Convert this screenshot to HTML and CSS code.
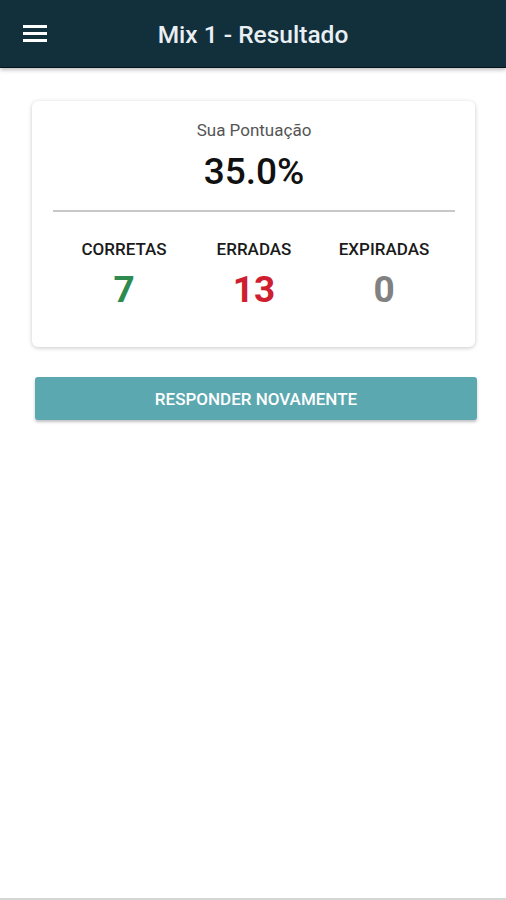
FILE: index.html
```html
<!DOCTYPE html>
<html>
    <head>
        <title>Mix 1 - Resultado</title>
        <link rel="stylesheet" href="styles.css">
    </head>
    <body>
        <header class="topbar">
            <button class="menu-btn" aria-label="Menu">
                <svg width="24" height="18" viewBox="0 0 24 18">
                    <rect x="0" y="1" width="24" height="3" fill="#ffffff"/>
                    <rect x="0" y="8" width="24" height="3" fill="#ffffff"/>
                    <rect x="0" y="15" width="24" height="3" fill="#ffffff"/>
                </svg>
            </button>
            <h1 class="title">Mix 1 - Resultado</h1>
        </header>
        <main class="content">
            <section class="result-card">
                <div class="score-label">Sua Pontuação</div>
                <div class="score-value">35.0%</div>
                <hr class="divider">
                <div class="stats">
                    <div class="stat">
                        <div class="stat-label">CORRETAS</div>
                        <div class="stat-value correct">7</div>
                    </div>
                    <div class="stat">
                        <div class="stat-label">ERRADAS</div>
                        <div class="stat-value wrong">13</div>
                    </div>
                    <div class="stat">
                        <div class="stat-label">EXPIRADAS</div>
                        <div class="stat-value expired">0</div>
                    </div>
                </div>
            </section>
            <button class="retry-btn">RESPONDER NOVAMENTE</button>
        </main>
        <div class="bottom-line"></div>
    </body>
</html>
```

FILE: styles.css
```css
html, body {
    height: 100%;
}
body {
    font-family: Roboto, "Noto Sans", sans-serif;
    background-color: #fff;
    margin: 0;
    display: flex;
    flex-direction: column;
}
.topbar {
    height: 67px;
    background-color: #12303c;
    border-bottom: 1px solid #05141a;
    box-shadow: 0 2px 4px rgba(0, 0, 0, 0.25);
    display: flex;
    align-items: center;
    position: relative;
}
.menu-btn {
    background: none;
    border: none;
    padding: 0;
    margin-left: 23px;
    margin-top: -2px;
    display: flex;
}
.title {
    position: absolute;
    left: 0;
    right: 0;
    margin: 0;
    text-align: center;
    color: #e9eff3;
    font-size: 24.5px;
    font-weight: 500;
    pointer-events: none;
    margin-top: 2px;
}
.content {
    flex: 1;
    padding: 33px 29px 0 32px;
}
.result-card {
    width: 443px;
    box-sizing: border-box;
    background-color: #fff;
    border-radius: 6px;
    box-shadow: 0 1px 4px rgba(0, 0, 0, 0.22);
    padding: 19px 20px 37px 21px;
    text-align: center;
}
.score-label {
    font-size: 17px;
    line-height: 20px;
    color: #555;
}
.score-value {
    margin-top: 12px;
    font-size: 37px;
    line-height: 40px;
    font-weight: 500;
    color: #111;
}
.divider {
    margin: 18px 0 0;
    border: none;
    height: 2px;
    background-color: #c8c8c8;
}
.stats {
    margin-top: 27px;
    display: grid;
    grid-template-columns: repeat(3, 130px);
    justify-content: center;
}
.stat-label {
    font-size: 17px;
    line-height: 20px;
    font-weight: 500;
    color: #1a1a1a;
}
.stat-value {
    margin-top: 11px;
    font-size: 37px;
    line-height: 40px;
    font-weight: 700;
}
.correct {
    color: #2e8a4f;
}
.wrong {
    color: #cf1e30;
}
.expired {
    color: #818181;
}
.retry-btn {
    display: block;
    width: 442px;
    height: 43px;
    margin: 30px 0 0 3px;
    background-color: #5ba8b1;
    color: #fff;
    border: none;
    border-radius: 3px;
    box-shadow: 0 2px 3px rgba(0, 0, 0, 0.25);
    font-family: Roboto, sans-serif;
    font-size: 17px;
    font-weight: 500;
}
.bottom-line {
    height: 2px;
    background-color: #d6d6d6;
}
```
